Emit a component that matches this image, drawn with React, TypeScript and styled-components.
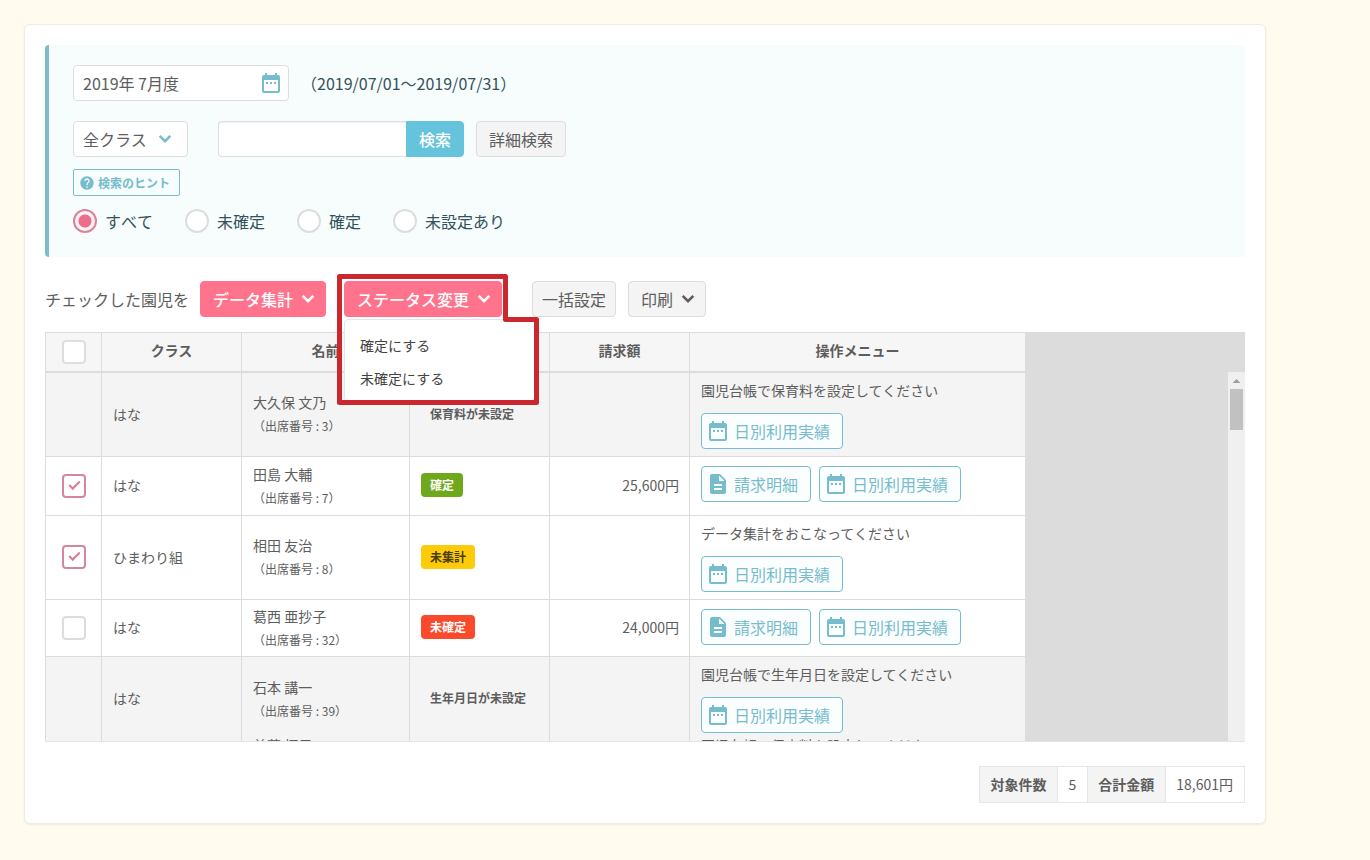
import React, { useState } from 'react';
import styled, { createGlobalStyle, css } from 'styled-components';
import { MdDateRange, MdDescription, MdHelp } from 'react-icons/md';

const GlobalStyle = createGlobalStyle`
  *, *::before, *::after { box-sizing: border-box; }
  body {
    margin: 0;
    min-height: 100vh;
    background: #fffbee;
    color: #5d5d5d;
    font-family: "Noto Sans CJK JP", "Noto Sans", sans-serif;
    font-size: 16px;
    line-height: 24px;
  }
  button, input, select { font: inherit; color: inherit; margin: 0; }
  svg { flex: none; }
`;

const Card = styled.main`
  margin: 24px 104px 36px 24px;
  padding: 20px;
  background: #fff;
  border: 1px solid #f0ece2;
  border-radius: 6px;
  box-shadow: 0 1px 2px rgba(0, 0, 0, 0.08);
`;

const SearchPanel = styled.form`
  padding: 20px 24px 23px;
  border-left: 4px solid #80bcc8;
  border-radius: 4px 0 0 4px;
  background: #f7fdfd;
  color: #34525a;
`;

const FieldRow = styled.div<{ $gap: number }>`
  display: flex;
  align-items: center;
  gap: 12px;
  margin-bottom: ${(p) => p.$gap}px;
`;

const fieldBox = css`
  height: 36px;
  border: 1px solid #ddd;
  border-radius: 4px;
  background: #fff;
  color: #5d5d5d;
  outline: none;
`;

const IconField = styled.div<{ $inset: number }>`
  position: relative;
  display: flex;
  color: #76bccd;
  > svg {
    position: absolute;
    top: 6px;
    right: ${(p) => p.$inset}px;
    pointer-events: none;
  }
`;

const MonthInput = styled.input`
  ${fieldBox}
  width: 216px;
  padding: 0 36px 0 9px;
`;

const ClassSelect = styled.select`
  ${fieldBox}
  width: 115px;
  padding: 0 30px 0 9px;
  appearance: none;
`;

const SearchGroup = styled.div`
  display: flex;
  margin-left: 18px;
`;

const KeywordInput = styled.input`
  ${fieldBox}
  width: 188px;
  padding: 0 10px;
  border-right: 0;
  border-radius: 4px 0 0 4px;
  box-shadow: inset 0 1px 1px rgba(0, 0, 0, 0.06);
`;

const Button = styled.button<{ $tone?: 'plain' | 'primary' | 'search'; $caret?: boolean; $pad?: number }>`
  display: inline-flex;
  align-items: center;
  gap: 3px;
  height: 36px;
  padding: 0 ${(p) => (p.$caret ? 5 : p.$pad ?? 12)}px 0 ${(p) => p.$pad ?? 12}px;
  border: 1px solid #ddd;
  border-radius: 4px;
  background: #f4f4f4;
  color: #5d5d5d;
  white-space: nowrap;
  cursor: pointer;
  ${(p) =>
    p.$tone === 'primary' &&
    css`
      border-color: #ff738c;
      background: #ff738c;
      color: #fff;
      font-weight: 500;
    `}
  ${(p) =>
    p.$tone === 'search' &&
    css`
      border-color: #66c3dc;
      border-radius: 0 4px 4px 0;
      background: #66c3dc;
      color: #fff;
      font-weight: 500;
    `}
`;

const HintButton = styled.button`
  display: flex;
  align-items: center;
  gap: 3px;
  height: 27px;
  margin-bottom: 12px;
  padding: 0 9px 0 5px;
  border: 1px solid #76bccd;
  border-radius: 2px;
  background: transparent;
  color: #76bccd;
  font-size: 12px;
  font-weight: 700;
  line-height: 16px;
  cursor: pointer;
`;

const RadioGroup = styled.fieldset`
  display: flex;
  gap: 32px;
  margin: 0;
  padding: 0;
  border: 0;
  font-kerning: none;
`;

const RadioLabel = styled.label`
  display: flex;
  align-items: center;
  gap: 8px;
  height: 26px;
`;

const Radio = styled.input`
  width: 24px;
  height: 24px;
  border: 2px solid #ddd;
  border-radius: 50%;
  background: #fff;
  appearance: none;
  &:checked {
    border-color: #d9849a;
    background: radial-gradient(circle, #ea6f8b 6px, #fdf3f5 7px);
  }
`;

const Toolbar = styled.div`
  display: flex;
  align-items: center;
  gap: 12px;
  margin: 24px 0 15px;
`;

const ToolbarLabel = styled.span`
  width: 143px;
  white-space: nowrap;
`;

const MenuHost = styled.div`
  position: relative;
  display: flex;
  margin: 0 18px 0 6px;
`;

const Menu = styled.ul`
  position: absolute;
  z-index: 2;
  top: 38px;
  left: 0;
  width: 191px;
  margin: 0;
  padding: 8px 0 6px;
  border: 1px solid #e4e4e4;
  border-radius: 4px;
  background: #fff;
  list-style: none;
`;

const MenuItem = styled.button`
  display: block;
  width: 100%;
  height: 33px;
  padding: 0 15px;
  border: 0;
  background: none;
  color: #444;
  font-size: 14px;
  text-align: left;
`;

const Highlight = styled.svg`
  position: absolute;
  z-index: 3;
  top: -7px;
  left: -7px;
  pointer-events: none;
`;

const GridFrame = styled.section`
  display: flex;
  height: 410px;
  overflow: hidden;
  border-bottom: 1px solid #e4e4e4;
  background: #dcdcdc;
`;

const Grid = styled.table`
  flex: none;
  width: 980px;
  height: max-content;
  border: 0 solid #dcdcdc;
  border-width: 1px 0 0 1px;
  border-spacing: 0;
  table-layout: fixed;
  font-size: 14px;
`;

const HeadCell = styled.th`
  height: 40px;
  padding: 0 0 4px;
  border: 0 solid #dcdcdc;
  border-width: 0 1px 2px 0;
  background: #f6f6f6;
  font-weight: 700;
  line-height: 20px;
  &:first-child { padding: 0 0 0 16px; }
  &:last-child { border-right: 0; }
`;

const Row = styled.tr<{ $height: number; $muted: boolean }>`
  height: ${(p) => p.$height}px;
  background: ${(p) => (p.$muted ? '#f4f4f4' : '#fff')};
`;

const Cell = styled.td<{ $open?: boolean }>`
  padding: 0 10px 2px 11px;
  border: 0 solid #dcdcdc;
  border-width: 0 1px ${(p) => (p.$open ? 0 : 1)}px 0;
  vertical-align: middle;
  white-space: nowrap;
`;

const CheckCell = styled(Cell)`
  padding: 0 0 1px 16px;
`;

const AmountCell = styled(Cell)`
  text-align: right;
`;

const ActionCell = styled(Cell)<{ $top: number }>`
  padding-top: ${(p) => p.$top}px;
  border-right: 0;
  vertical-align: top;
`;

const ClippedCell = styled(Cell)`
  line-height: 8px;
  vertical-align: top;
`;

const Check = styled.input`
  display: block;
  position: relative;
  width: 24px;
  height: 24px;
  border: 2px solid #ddd;
  border-radius: 4px;
  background: #fff;
  appearance: none;
  &:checked { border-color: #d6869b; }
  &:checked::after {
    content: '';
    position: absolute;
    top: 5px;
    left: 5px;
    width: 11px;
    height: 6px;
    border: solid #dd7a92;
    border-width: 0 0 2px 2px;
    transform: rotate(-45deg);
  }
`;

const PersonName = styled.div`
  line-height: 24px;
`;

const PersonNumber = styled.div`
  font-size: 12px;
  line-height: 23px;
`;

const badgeTones = {
  none: css`background: transparent; color: #5d5d5d;`,
  fixed: css`background: #6fa81c; color: #fff;`,
  pending: css`background: #fdcb0a; color: #4a3c10;`,
  open: css`background: #fb4a2b; color: #fff;`,
};

const Badge = styled.span<{ $tone: keyof typeof badgeTones }>`
  display: block;
  width: fit-content;
  padding: 0 9px;
  border-radius: 4px;
  font-size: 12px;
  font-weight: 700;
  line-height: 24px;
  ${(p) => badgeTones[p.$tone]}
`;

const Note = styled.p`
  margin: 0 0 13px;
  line-height: 20px;
`;

const Actions = styled.div`
  display: flex;
  gap: 8px;
`;

const ActionButton = styled.button`
  display: flex;
  align-items: center;
  gap: 4px;
  height: 36px;
  padding: 0 12px 0 4px;
  border: 1px solid #76bccd;
  border-radius: 4px;
  background: #fbfefe;
  color: #76bccd;
  font-size: 16px;
  cursor: pointer;
`;

const ScrollTrack = styled.div`
  display: flex;
  flex-direction: column;
  align-items: center;
  width: 17px;
  margin: 40px 0 0 auto;
  background: #f0f0f0;
`;

const ScrollArrow = styled.span`
  width: 8px;
  height: 4px;
  margin: 7px 0 6px;
  background: #a0a0a0;
  clip-path: polygon(50% 0, 100% 100%, 0 100%);
`;

const ScrollThumb = styled.span`
  width: 13px;
  height: 41px;
  background: #c1c1c1;
`;

const Summary = styled.table`
  margin: 24px 0 0 auto;
  border: 0 solid #e6e6e6;
  border-width: 1px 0 1px 1px;
  border-spacing: 0;
  font-size: 14px;
  th, td {
    height: 35px;
    padding: 0 11px 2px 10px;
    border-right: 1px solid #e6e6e6;
  }
  th { background: #f4f4f4; }
`;

type Child = {
  group: string;
  name: string;
  number: number;
  status: string;
  tone: keyof typeof badgeTones;
  amount?: string;
  note?: string;
  checked?: boolean;
  height: number;
};

const children: Child[] = [
  { group: 'はな', name: '大久保 文乃', number: 3, status: '保育料が未設定', tone: 'none', note: '園児台帳で保育料を設定してください', height: 84 },
  { group: 'はな', name: '田島 大輔', number: 7, status: '確定', tone: 'fixed', amount: '25,600円', checked: true, height: 59 },
  { group: 'ひまわり組', name: '相田 友治', number: 8, status: '未集計', tone: 'pending', note: 'データ集計をおこなってください', checked: true, height: 84 },
  { group: 'はな', name: '葛西 亜抄子', number: 32, status: '未確定', tone: 'open', amount: '24,000円', checked: false, height: 57 },
  { group: 'はな', name: '石本 講一', number: 39, status: '生年月日が未設定', tone: 'none', note: '園児台帳で生年月日を設定してください', height: 84 },
];

const filters = ['すべて', '未確定', '確定', '未設定あり'];

function Chevron() {
  return (
    <svg width="24" height="24" viewBox="0 0 24 24" aria-hidden="true">
      <path d="M6.7 8.8L12 14.1L17.3 8.8" fill="none" stroke="currentColor" strokeWidth="2.6" />
    </svg>
  );
}

function ChildRow({ child, last }: { child: Child; last: boolean }) {
  return (
    <Row $height={child.height} $muted={child.tone === 'none'}>
      <CheckCell $open={last}>
        {child.checked !== undefined && (
          <Check type="checkbox" defaultChecked={child.checked} aria-label={child.name} />
        )}
      </CheckCell>
      <Cell $open={last}>{child.group}</Cell>
      <Cell $open={last}>
        <PersonName>{child.name}</PersonName>
        <PersonNumber>（出席番号 : {child.number}）</PersonNumber>
      </Cell>
      <Cell $open={last}>
        <Badge $tone={child.tone}>{child.status}</Badge>
      </Cell>
      <AmountCell $open={last}>{child.amount}</AmountCell>
      <ActionCell $open={last} $top={child.note ? 7 : 9}>
        {child.note && <Note>{child.note}</Note>}
        <Actions>
          {child.amount && (
            <ActionButton type="button">
              <MdDescription size={24} />
              請求明細
            </ActionButton>
          )}
          <ActionButton type="button">
            <MdDateRange size={24} />
            日別利用実績
          </ActionButton>
        </Actions>
      </ActionCell>
    </Row>
  );
}

export default function App() {
  const [filter, setFilter] = useState(filters[0]);

  return (
    <>
      <GlobalStyle />
      <Card>
        <SearchPanel onSubmit={(e) => e.preventDefault()}>
          <FieldRow $gap={20}>
            <IconField $inset={6}>
              <MonthInput type="text" aria-label="対象月" defaultValue="2019年 7月度" />
              <MdDateRange size={24} />
            </IconField>
            <span>（2019/07/01〜2019/07/31）</span>
          </FieldRow>
          <FieldRow $gap={12}>
            <IconField $inset={11}>
              <ClassSelect aria-label="クラス">
                <option>全クラス</option>
              </ClassSelect>
              <Chevron />
            </IconField>
            <SearchGroup>
              <KeywordInput type="text" aria-label="キーワード" />
              <Button type="submit" $tone="search">検索</Button>
            </SearchGroup>
            <Button type="button">詳細検索</Button>
          </FieldRow>
          <HintButton type="button">
            <MdHelp size={16} />
            検索のヒント
          </HintButton>
          <RadioGroup>
            {filters.map((name) => (
              <RadioLabel key={name}>
                <Radio type="radio" name="status" checked={filter === name} onChange={() => setFilter(name)} />
                {name}
              </RadioLabel>
            ))}
          </RadioGroup>
        </SearchPanel>

        <Toolbar>
          <ToolbarLabel>チェックした園児を</ToolbarLabel>
          <Button type="button" $tone="primary" $caret>
            データ集計
            <Chevron />
          </Button>
          <MenuHost>
            <Button type="button" $tone="primary" $caret aria-expanded="true">
              ステータス変更
              <Chevron />
            </Button>
            <Menu>
              <li><MenuItem type="button">確定にする</MenuItem></li>
              <li><MenuItem type="button">未確定にする</MenuItem></li>
            </Menu>
            <Highlight width="202" height="131" viewBox="0 0 202 131" aria-hidden="true">
              <path
                d="M2.5 2.5H168.5V45.5H199.5V128.5H2.5Z"
                fill="none"
                stroke="#cb272f"
                strokeWidth="5"
                strokeLinejoin="round"
              />
            </Highlight>
          </MenuHost>
          <Button type="button" $pad={9}>一括設定</Button>
          <Button type="button" $caret>
            印刷
            <Chevron />
          </Button>
        </Toolbar>

        <GridFrame>
          <Grid>
            <colgroup>
              <col width="56" />
              <col width="140" />
              <col width="168" />
              <col width="140" />
              <col width="140" />
              <col />
            </colgroup>
            <thead>
              <tr>
                <HeadCell>
                  <Check type="checkbox" aria-label="すべて選択" />
                </HeadCell>
                <HeadCell>クラス</HeadCell>
                <HeadCell>名前</HeadCell>
                <HeadCell>ステータス</HeadCell>
                <HeadCell>請求額</HeadCell>
                <HeadCell>操作メニュー</HeadCell>
              </tr>
            </thead>
            <tbody>
              {children.map((child, i) => (
                <ChildRow key={child.number} child={child} last={i === children.length - 1} />
              ))}
              <Row $height={84} $muted>
                <ClippedCell />
                <ClippedCell />
                <ClippedCell>首藤 拓馬</ClippedCell>
                <ClippedCell />
                <ClippedCell />
                <ClippedCell>園児台帳で保育料を設定してください</ClippedCell>
              </Row>
            </tbody>
          </Grid>
          <ScrollTrack>
            <ScrollArrow />
            <ScrollThumb />
          </ScrollTrack>
        </GridFrame>

        <Summary>
          <tbody>
            <tr>
              <th scope="row">対象件数</th>
              <td>5</td>
              <th scope="row">合計金額</th>
              <td>18,601円</td>
            </tr>
          </tbody>
        </Summary>
      </Card>
    </>
  );
}
